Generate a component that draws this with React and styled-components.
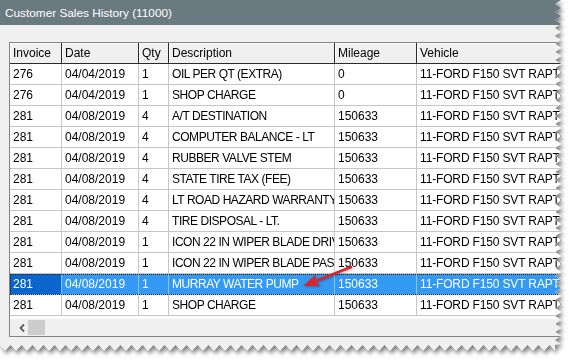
import React from "react";
import styled, { createGlobalStyle } from "styled-components";

const Global = createGlobalStyle`
  html, body { margin: 0; padding: 0; background: #ffffff; }
  body { font-family: "Liberation Sans", Arial, sans-serif; }
`;

const W = 562;
const H = 352;

function makeClip() {
  const pts = [];
  pts.push("0px 0px");
  const rightIn = 555;
  const rightOut = 561;
  const bottomIn = 345;
  const bottomOut = 351;
  let y = 0;
  let out = true;
  while (y < bottomIn) {
    pts.push(`${out ? rightOut : rightIn}px ${y}px`);
    y += 4;
    out = !out;
  }
  pts.push(`${rightIn}px ${bottomIn}px`);
  let x = rightIn;
  let down = true;
  while (x > 0) {
    pts.push(`${x}px ${down ? bottomOut : bottomIn}px`);
    x -= 5.5;
    down = !down;
  }
  pts.push(`0px ${bottomIn}px`);
  return pts.join(", ");
}

const CLIP = makeClip();

const Page = styled.div`
  width: 569px;
  height: 360px;
  overflow: hidden;
  background: #fff;
`;

const Shadow = styled.div`
  width: ${W}px;
  height: ${H}px;
  filter: drop-shadow(2px 3px 2px rgba(0, 0, 0, 0.5));
`;

const Window = styled.div`
  width: ${W}px;
  height: ${H}px;
  background: #f0f0f0;
  clip-path: polygon(${CLIP});
  display: flex;
  flex-direction: column;
  overflow: hidden;
`;

const TitleBar = styled.div`
  height: 25px;
  flex: none;
  background: #6a7a81;
  color: #ffffff;
  display: flex;
  align-items: center;
  padding-left: 5px;
  font-size: 11.8px;
`;

const Body = styled.div`
  flex: 1;
  padding: 17px 0 0 9px;
`;

const Grid = styled.div`
  position: relative;
  width: 640px;
  border: 1px solid #7f8489;
  background: #ffffff;
  display: flex;
  flex-direction: column;
  font-size: 12px;
  color: #000;
`;

const COLS = "52px 77px 30px 166px 82px 233px";

const HeaderRow = styled.div`
  display: grid;
  grid-template-columns: ${COLS};
  height: 21px;
`;

const HeaderCell = styled.div`
  background: #f0f0f0;
  box-shadow: inset 1px 1px 0 #ffffff;
  border-right: 1px solid #2a2a2a;
  border-bottom: 1px solid #2a2a2a;
  padding-left: 3px;
  display: flex;
  align-items: center;
  white-space: nowrap;
  overflow: hidden;
`;

const Row = styled.div`
  display: grid;
  grid-template-columns: ${COLS};
  height: 21px;
  position: relative;
  ${(p) =>
    p.$selected &&
    `
    outline: 1px dotted #3a2400;
    outline-offset: -1px;
  `}
`;

const Cell = styled.div`
  border-right: 1px solid ${(p) => (p.$selected ? "#8cc0f2" : "#c6c6c6")};
  border-bottom: 1px solid ${(p) => (p.$selected ? "#8cc0f2" : "#c6c6c6")};
  background: ${(p) =>
    p.$selected ? (p.$focus ? "#0a66cc" : "#3399f3") : "#ffffff"};
  color: ${(p) => (p.$selected ? "#ffffff" : "#000000")};
  padding-left: 3px;
  display: flex;
  align-items: center;
  white-space: nowrap;
  overflow: hidden;
  letter-spacing: ${(p) => p.$track || "0"};
`;

const Spacer = styled.div`
  height: 3px;
`;

const ScrollBar = styled.div`
  height: 17px;
  background: #f0f0f0;
  display: flex;
  align-items: center;
  padding-left: 5px;
`;

const ScrollArrow = styled.div`
  width: 13px;
  height: 15px;
  display: flex;
  align-items: center;
  justify-content: center;
`;

const Thumb = styled.div`
  width: 17px;
  height: 15px;
  background: #cdcdcd;
`;

const ArrowSvg = styled.svg`
  position: absolute;
  left: 280px;
  top: 215px;
  overflow: visible;
  filter: drop-shadow(1px 1px 1px rgba(0, 0, 0, 0.3));
`;

const headers = ["Invoice", "Date", "Qty", "Description", "Mileage", "Vehicle"];
const V = "11-FORD F150 SVT RAPTOR";
const TRACK = ["0", "0", "0", "-0.45px", "0", "-0.15px"];

const rows = [
  ["276", "04/04/2019", "1", "OIL PER QT (EXTRA)", "0", V],
  ["276", "04/04/2019", "1", "SHOP CHARGE", "0", V],
  ["281", "04/08/2019", "4", "A/T DESTINATION", "150633", V],
  ["281", "04/08/2019", "4", "COMPUTER BALANCE - LT", "150633", V],
  ["281", "04/08/2019", "4", "RUBBER VALVE STEM", "150633", V],
  ["281", "04/08/2019", "4", "STATE TIRE TAX (FEE)", "150633", V],
  ["281", "04/08/2019", "4", "LT ROAD HAZARD WARRANTY 1 YEAR", "150633", V],
  ["281", "04/08/2019", "4", "TIRE DISPOSAL - LT.", "150633", V],
  ["281", "04/08/2019", "1", "ICON 22 IN WIPER BLADE DRIVER", "150633", V],
  ["281", "04/08/2019", "1", "ICON 22 IN WIPER BLADE PASS.", "150633", V],
  ["281", "04/08/2019", "1", "MURRAY WATER PUMP", "150633", V],
  ["281", "04/08/2019", "1", "SHOP CHARGE", "150633", V],
];

const SELECTED = 10;

function Arrow() {
  const ox = 10 + 280;
  const oy = 43 + 215;
  const tail = [351 - ox, 267 - oy];
  const tip = [303 - ox, 286 - oy];
  const dx = tip[0] - tail[0];
  const dy = tip[1] - tail[1];
  const len = Math.hypot(dx, dy);
  const ux = dx / len;
  const uy = dy / len;
  const hl = 16;
  const hw = 6;
  const bx = tip[0] - ux * hl;
  const by = tip[1] - uy * hl;
  const px = -uy;
  const py = ux;
  const c1 = [bx + px * hw, by + py * hw];
  const c2 = [bx - px * hw, by - py * hw];
  const notch = [tip[0] - ux * (hl - 3), tip[1] - uy * (hl - 3)];
  return (
    <ArrowSvg width="80" height="40" viewBox="0 0 80 40">
      <line
        x1={tail[0]}
        y1={tail[1]}
        x2={notch[0]}
        y2={notch[1]}
        stroke="#d8262b"
        strokeWidth="2.6"
        strokeLinecap="round"
      />
      <polygon
        points={`${tip[0]},${tip[1]} ${c1[0]},${c1[1]} ${notch[0]},${notch[1]} ${c2[0]},${c2[1]}`}
        fill="#d8262b"
      />
    </ArrowSvg>
  );
}

export default function App() {
  return (
    <Page>
      <Global />
      <Shadow>
        <Window>
          <TitleBar>Customer Sales History (11000)</TitleBar>
          <Body>
            <Grid>
              <HeaderRow>
                {headers.map((h) => (
                  <HeaderCell key={h}>{h}</HeaderCell>
                ))}
              </HeaderRow>
              {rows.map((r, i) => {
                const sel = i === SELECTED;
                return (
                  <Row key={i} $selected={sel}>
                    {r.map((c, j) => (
                      <Cell
                        key={j}
                        $selected={sel}
                        $focus={sel && j === 0}
                        $track={TRACK[j]}
                      >
                        {c}
                      </Cell>
                    ))}
                  </Row>
                );
              })}
              <Spacer />
              <ScrollBar>
                <ScrollArrow>
                  <svg width="8" height="10" viewBox="0 0 8 10">
                    <path
                      d="M6 1.5 L2.5 5 L6 8.5"
                      fill="none"
                      stroke="#606060"
                      strokeWidth="1.8"
                    />
                  </svg>
                </ScrollArrow>
                <Thumb />
              </ScrollBar>
              <Arrow />
            </Grid>
          </Body>
        </Window>
      </Shadow>
    </Page>
  );
}
